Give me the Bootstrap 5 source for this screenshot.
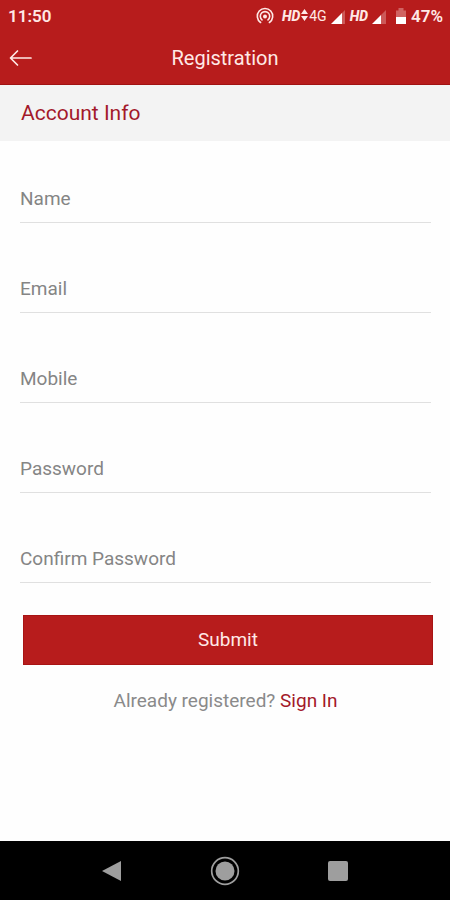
<!DOCTYPE html>
<html lang="en">
<head>
<meta charset="utf-8">
<meta name="viewport" content="width=device-width, initial-scale=1">
<title>Registration</title>
<link href="https://cdn.jsdelivr.net/npm/bootstrap@5.3.0/dist/css/bootstrap.min.css" rel="stylesheet">
<style>
  :root { --brand: #b71c1c; --brand-text: #a3192a; --on-brand: #ffe9e6; }
  body { font-family: Roboto, "Liberation Sans", sans-serif; font-size: 19px; line-height: 24px; color: #8a8a8a; background: #fefefe; }
  svg { display: block; flex: none; }
  .app-top { background: var(--brand); color: var(--on-brand); border-bottom: 1px solid #a01212; }
  .status-bar { height: 32px; padding: 0 7px 0 8px; font-size: 17px; font-weight: 600; }
  .status-icons { gap: 4px; }
  .net-label { font-size: 14px; font-style: italic; font-weight: 800; }
  .net-type { font-family: "Liberation Sans Narrow", Roboto, sans-serif; font-size: 14px; font-weight: 400; }
  .title-bar { display: grid; grid-template-columns: 40px 1fr 40px; height: 52px; }
  .title-bar h1 { font-size: 20px; line-height: 24px; font-weight: 400; }
  .back-btn { color: inherit; padding: 8px 9px; }
  .section-title { background: #f3f3f3; color: var(--brand-text); font-size: 21px; line-height: 28px; font-weight: 400; padding: 14px 21px; }
  .signup { padding: 34px 17px 0 20px; }
  .field { display: grid; margin: 0 2px 42px 0; }
  .field > * { grid-area: 1 / 1; }
  .field label { align-self: center; pointer-events: none; color: #858585; }
  .field .form-control { height: 48px; padding: 0; border: 0; border-bottom: 1px solid #e0e0e0; border-radius: 0; background: transparent; font-size: 19px; line-height: 24px; color: #555; }
  .field .form-control:focus { box-shadow: none; border-color: var(--brand); }
  .field .form-control:not(:placeholder-shown) + label { visibility: hidden; }
  .field:last-of-type { margin-bottom: 32px; }
  .submit-wrap { padding: 0 0 0 3px; }
  .submit-btn, .submit-btn:hover { height: 50px; border: 1px solid #a81414; border-radius: 0; background: var(--brand); color: var(--on-brand); font-size: 19px; line-height: 24px; }
  .signin-line { margin: 24px 2px 0 0; }
  .signin-line a { color: var(--brand-text); }
  .system-nav { height: 59px; padding: 0 97px; background: #000; color: #9e9e9e; }
  .system-nav button { color: inherit; }
</style>
</head>
<body class="d-flex flex-column min-vh-100">
<header class="app-top">
  <div class="status-bar d-flex align-items-center justify-content-between">
    <span>11:50</span>
    <div class="status-icons d-flex align-items-center">
      <svg class="me-1" width="18" height="18" viewBox="0 0 18 18" fill="none" stroke="currentColor" stroke-width="1.6" stroke-linecap="round" aria-hidden="true"><path d="M4.600 15.500a7.700 7.700 0 1 1 8.800 0M6 12.900a4.700 4.700 0 1 1 6 0"/><circle cx="9" cy="9.500" r="2" fill="currentColor" stroke="none"/></svg>
      <div class="d-flex align-items-center">
        <span class="net-label">HD</span>
        <svg width="9" height="14" viewBox="0 0 9 14" fill="currentColor" aria-hidden="true"><path d="M4.500 0L8 5H1zM4.500 12L1 7h7z"/></svg>
        <span class="net-type">4G</span>
      </div>
      <svg width="15" height="15" viewBox="0 0 15 15" aria-hidden="true"><path fill="currentColor" opacity=".3" d="M10 5l4-4v14h-4z"/><path fill="#fff" d="M0 15L11 4v11z"/></svg>
      <span class="net-label">HD</span>
      <svg class="me-1" width="15" height="15" viewBox="0 0 15 15" aria-hidden="true"><path fill="currentColor" opacity=".3" d="M9 6l5-5v14H9z"/><path fill="#fff" d="M0 15L9 6v9z"/></svg>
      <svg width="12" height="16" viewBox="0 0 12 16" aria-hidden="true"><path fill="currentColor" opacity=".35" d="M1 2.500h2.500V0h5v2.500H11V9H1z"/><path fill="#fff" d="M1 9h10v7H1z"/></svg>
      <span>47%</span>
    </div>
  </div>
  <div class="title-bar align-items-center">
    <button type="button" class="btn back-btn border-0" aria-label="Back">
      <svg width="23" height="18" viewBox="0 0 23 18" fill="none" stroke="currentColor" stroke-width="1.7" stroke-linecap="round" stroke-linejoin="round" aria-hidden="true"><path d="M22 9H2M8.500 2L1.500 9l7 7"/></svg>
    </button>
    <h1 class="m-0 text-center">Registration</h1>
  </div>
</header>
<main class="flex-grow-1">
  <h2 class="section-title m-0">Account Info</h2>
  <form class="signup">
    <div class="field"><input class="form-control" id="name" type="text" placeholder=" "><label for="name">Name</label></div>
    <div class="field"><input class="form-control" id="email" type="email" placeholder=" "><label for="email">Email</label></div>
    <div class="field"><input class="form-control" id="mobile" type="tel" placeholder=" "><label for="mobile">Mobile</label></div>
    <div class="field"><input class="form-control" id="password" type="password" placeholder=" "><label for="password">Password</label></div>
    <div class="field"><input class="form-control" id="confirm" type="password" placeholder=" "><label for="confirm">Confirm Password</label></div>
    <section class="submit-wrap"><button type="submit" class="btn submit-btn w-100">Submit</button></section>
    <p class="signin-line text-center">Already registered? <a class="text-decoration-none" href="#">Sign In</a></p>
  </form>
</main>
<nav class="system-nav d-flex align-items-center justify-content-between" aria-label="System">
  <button type="button" class="btn border-0 p-1" aria-label="Back"><svg width="22" height="22" viewBox="0 0 22 22" fill="currentColor" aria-hidden="true"><path d="M1 11L20 1v20z"/></svg></button>
  <button type="button" class="btn border-0 p-0" aria-label="Home"><svg width="30" height="30" viewBox="0 0 30 30" aria-hidden="true"><circle cx="15" cy="15" r="13.300" fill="none" stroke="currentColor" stroke-width="1.700"/><circle cx="15" cy="15" r="9.500" fill="currentColor"/></svg></button>
  <button type="button" class="btn border-0 p-1" aria-label="Recents"><svg width="22" height="22" viewBox="0 0 22 22" fill="currentColor" aria-hidden="true"><rect x="1" y="1" width="20" height="20" rx="2"/></svg></button>
</nav>
<script src="https://cdn.jsdelivr.net/npm/bootstrap@5.3.0/dist/js/bootstrap.bundle.min.js"></script>
</body>
</html>
